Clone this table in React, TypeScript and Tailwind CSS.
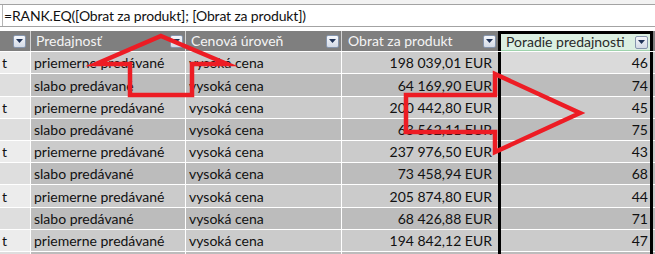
import React from 'react';

type Row = { key: string; sales: string; price: string; revenue: string; rank: number };

const rows: Row[] = [
  { key: 't', sales: 'priemerne predávané', price: 'vysoká cena', revenue: '198 039,01 EUR', rank: 46 },
  { key: '', sales: 'slabo predávané', price: 'vysoká cena', revenue: '64 169,90 EUR', rank: 74 },
  { key: 't', sales: 'priemerne predávané', price: 'vysoká cena', revenue: '200 442,80 EUR', rank: 45 },
  { key: '', sales: 'slabo predávané', price: 'vysoká cena', revenue: '63 562,11 EUR', rank: 75 },
  { key: 't', sales: 'priemerne predávané', price: 'vysoká cena', revenue: '237 976,50 EUR', rank: 43 },
  { key: '', sales: 'slabo predávané', price: 'vysoká cena', revenue: '73 458,94 EUR', rank: 68 },
  { key: 't', sales: 'priemerne predávané', price: 'vysoká cena', revenue: '205 874,80 EUR', rank: 44 },
  { key: '', sales: 'slabo predávané', price: 'vysoká cena', revenue: '68 426,88 EUR', rank: 71 },
  { key: 't', sales: 'priemerne predávané', price: 'vysoká cena', revenue: '194 842,12 EUR', rank: 47 },
  { key: '', sales: '', price: '', revenue: '', rank: 0 },
];

// row heights follow the grid lines of the sheet
const heights = ['h-[22px]', 'h-[23px]', 'h-[22px]', 'h-[22px]', 'h-[22px]', 'h-[22px]', 'h-[23px]', 'h-[22px]', 'h-[22px]', 'h-[22px]'];

const FilterButton = () => (
  <div className="flex h-[13px] w-[13px] shrink-0 items-center justify-center rounded-[2px] border border-[#8595ad] bg-gradient-to-b from-[#f5f7fb] to-[#d3dae6]">
    <svg width="7" height="4" viewBox="0 0 7 4">
      <path d="M0 0h7L3.5 4z" fill="#1f3358" />
    </svg>
  </div>
);

const HeaderCell = ({ label, className }: { label: string; className: string }) => (
  <div className={`flex h-full items-center justify-between pl-[5px] pr-[2px] ${className}`}>
    <span className="whitespace-nowrap">{label}</span>
    <FilterButton />
  </div>
);

export default function App() {
  return (
    <div className="relative h-[254px] w-[655px] overflow-hidden bg-white font-['Lato',sans-serif] text-[14px] leading-none text-[#111111]">
      {/* ribbon edge */}
      <div className="h-[4px] bg-[#f2f2f2]" />

      {/* formula bar */}
      <div className="flex h-[23px] items-center border-y border-[#a3a3a3]">
        <div className="ml-[2px] flex h-full items-center border-l border-[#b5b5b5] pl-[1px] pt-[1px] tracking-[-0.15px]">
          =RANK.EQ([Obrat za produkt]; [Obrat za produkt])
        </div>
      </div>
      <div className="h-[4px]" />

      {/* table header */}
      <div className="flex h-[21px] border-b border-white">
        <div className="flex w-[31px] items-center justify-end border-r border-[#d4d4d4] bg-[#7f7f7f] pr-[4px]">
          <FilterButton />
        </div>
        <div className="w-[155px] border-r border-[#d4d4d4] bg-[#7f7f7f] text-[#f4f4f4]">
          <HeaderCell label="Predajnosť" className="" />
        </div>
        <div className="w-[156px] border-r border-[#d4d4d4] bg-[#7f7f7f] text-[#f4f4f4]">
          <HeaderCell label="Cenová úroveň" className="" />
        </div>
        <div className="w-[156px] bg-[#7f7f7f] text-[#f4f4f4]">
          <HeaderCell label="Obrat za produkt" className="pl-[6px]" />
        </div>
        <div className="w-[155px] border-x-[3px] border-t-[3px] border-black bg-[#dbefe2] text-[#2a2a2a]">
          <div className="h-full border-b border-[#9fd3ad]">
            <HeaderCell label="Poradie predajnosti" className="pl-[3px]" />
          </div>
        </div>
        <div className="flex-1 bg-[#7f7f7f]" />
      </div>

      {/* table body */}
      {rows.map((r, i) => {
        const odd = i % 2 === 0;
        const cell = odd ? 'bg-[#cbcbcb]' : 'bg-[#bcbcbc]';
        return (
          <div key={i} className={`flex ${heights[i]}`}>
            <div
              className={`flex w-[31px] items-center border-r border-b border-white pl-[2px] pt-[1px] ${odd ? 'bg-[#ececec]' : 'bg-[#dedede]'}`}
            >
              {r.key}
            </div>
            <div className={`flex w-[155px] items-center border-r border-b border-white pl-[3px] pt-[1px] ${cell}`}>
              {r.sales}
            </div>
            <div className={`flex w-[156px] items-center border-r border-b border-white pl-[3px] pt-[1px] ${cell}`}>
              {r.price}
            </div>
            <div className={`flex w-[156px] items-center justify-end border-b border-white pr-[6px] pt-[1px] ${cell}`}>
              {r.revenue}
            </div>
            <div className="w-[155px] border-x-[3px] border-black">
              <div
                className={`flex h-full items-center justify-end border-b border-white pr-[2px] pt-[1px] ${
                  i === 0 ? 'bg-[#dadada]' : cell
                }`}
              >
                {r.rank ? r.rank : ''}
              </div>
            </div>
            <div className={`flex-1 border-b border-white ${cell}`} />
          </div>
        );
      })}

      {/* red annotation arrows drawn over the sheet */}
      <svg className="pointer-events-none absolute inset-0" width="655" height="254" viewBox="0 0 655 254">
        <g fill="none" stroke="#ed1c24" strokeWidth="4.5" strokeLinejoin="miter" strokeMiterlimit="6">
          <polygon points="161,36 227,64 192,64 192,95 130,95 130,64 96,64" />
          <polygon points="406,95 495,95 495,74 580,113 495,152 495,132 406,132" />
        </g>
      </svg>
    </div>
  );
}
